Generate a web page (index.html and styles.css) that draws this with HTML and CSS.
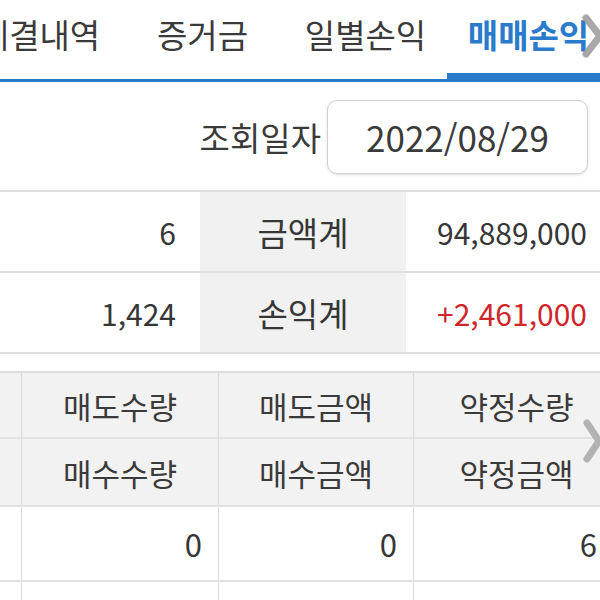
FILE: index.html
```html
<!DOCTYPE html>
<html lang="ko">
<head>
<meta charset="utf-8">
<link rel="stylesheet" href="styles.css">
</head>
<body>
<div class="page">
  <nav class="tabbar">
    <div class="tabstrip">
      <div class="tab">체결내역</div>
      <div class="tab">증거금</div>
      <div class="tab">일별손익</div>
      <div class="tab active">매매손익</div>
    </div>
    <svg class="chev chev-top" width="22" height="44" viewBox="0 0 22 44"><polyline points="4,4 18,22 4,40" fill="none" stroke="#9a9a9a" stroke-width="7" stroke-linecap="round" stroke-linejoin="round"/></svg>
  </nav>

  <div class="daterow">
    <span class="datelabel">조회일자</span>
    <div class="datebox">2022/08/29</div>
  </div>

  <div class="summary">
    <div class="sv">6</div>
    <div class="sl">금액계</div>
    <div class="sv last">94,889,000</div>
    <div class="sv">1,424</div>
    <div class="sl">손익계</div>
    <div class="sv last red">+2,461,000</div>
  </div>

  <div class="gridwrap">
    <div class="grid">
      <div class="gh"></div>
      <div class="gh">매도수량</div>
      <div class="gh">매도금액</div>
      <div class="gh">약정수량</div>
      <div class="gh"></div>
      <div class="gh">매수수량</div>
      <div class="gh">매수금액</div>
      <div class="gh">약정금액</div>
      <div class="gd"></div>
      <div class="gd">0</div>
      <div class="gd">0</div>
      <div class="gd">6</div>
      <div class="gd"></div>
      <div class="gd"></div>
      <div class="gd"></div>
      <div class="gd"></div>
    </div>
    <svg class="chev chev-mid" width="20" height="44" viewBox="0 0 20 44"><polyline points="4,4 16,22 4,40" fill="none" stroke="#b3b3b3" stroke-width="7" stroke-linecap="round" stroke-linejoin="round"/></svg>
  </div>
</div>
</body>
</html>
```

FILE: styles.css
```css
* { box-sizing: border-box; }
html, body { margin: 0; padding: 0; background: #fff; }
body {
  font-family: "Noto Sans CJK KR", "Noto Sans", sans-serif;
  color: #363636;
  width: 600px;
  height: 600px;
  overflow: hidden;
}
.page { width: 600px; }

.tabbar {
  position: relative;
  height: 82px;
  overflow: hidden;
  border-bottom: 3px solid #2b7bcc;
}
.tabstrip {
  display: flex;
  margin-left: -42px;
  height: 79px;
}
.tab {
  flex: 0 0 163px;
  height: 79px;
  padding-top: 12px;
  font-size: 33px;
  line-height: 44px;
  text-align: center;
  color: #3a3a3a;
  white-space: nowrap;
}
.tab.active {
  color: #2b7bcc;
  font-weight: 700;
  box-shadow: inset 0 -6px 0 #2b7bcc;
}
.chev { position: absolute; }
.chev-top { right: -4px; top: 14px; opacity: 0.85; }

.daterow {
  height: 108px;
  display: flex;
  justify-content: flex-end;
  align-items: center;
  padding-right: 12px;
  padding-top: 1px;
}
.datelabel {
  font-size: 33px;
  margin-right: 6px;
  color: #3a3a3a;
}
.datebox {
  width: 261px;
  height: 74px;
  border: 1px solid #cfcfcf;
  border-radius: 10px;
  box-shadow: 0 1px 3px rgba(0,0,0,0.12);
  display: flex;
  align-items: center;
  justify-content: center;
  font-size: 35px;
  color: #3a3a3a;
}

.summary {
  display: grid;
  grid-template-columns: 200px 206px 194px;
  grid-auto-rows: 81px;
  border-top: 2px solid #dedede;
}
.summary > div {
  border-bottom: 2px solid #dedede;
  display: flex;
  align-items: center;
  font-size: 30px;
}
.sv { justify-content: flex-end; padding-right: 24px; }
.sv.last { padding-right: 13px; }
.sl { justify-content: center; background: #f1f1f1; font-size: 33px !important; }
.red { color: #d0262b; }

.gridwrap {
  position: relative;
  margin-top: 17px;
  overflow: hidden;
  height: 240px;
}
.grid {
  display: grid;
  width: 620px;
  grid-template-columns: 22px 197px 195px 206px;
  grid-template-rows: 66px 68px 75px 40px;
  border-top: 2px solid #dedede;
}
.grid > div {
  border-right: 1px solid #dcdcdc;
  border-bottom: 2px solid #e2e2e2;
  display: flex;
  align-items: center;
}
.gh {
  background: #f2f2f2;
  justify-content: center;
  font-size: 31px;
  color: #3a3a3a;
}
.gd {
  justify-content: flex-end;
  padding-right: 16px;
  font-size: 31px;
}
.gd:nth-child(12) { padding-right: 22px; }
.chev-mid { right: -3px; top: 48px; }
```
